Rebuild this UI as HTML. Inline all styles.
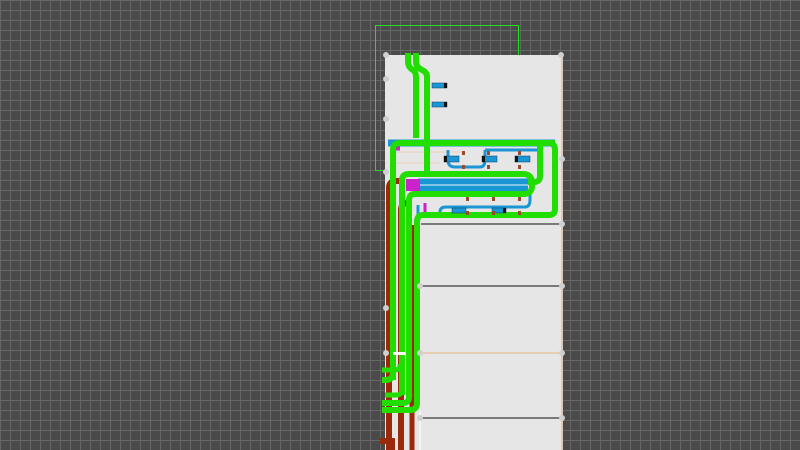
<!DOCTYPE html>
<html><head><style>html,body{margin:0;padding:0;background:#4b4b4b}svg{display:block}</style></head><body>
<svg width="800" height="450" viewBox="0 0 800 450" xmlns="http://www.w3.org/2000/svg">
<defs><pattern id="g" width="10" height="10" patternUnits="userSpaceOnUse"><rect width="10" height="10" fill="#4a4a4a"/><path d="M0 0.5H10M0.5 0V10" stroke="#666" stroke-width="1"/></pattern></defs>
<rect width="800" height="450" fill="url(#g)"/>
<rect x="375.5" y="25.5" width="143" height="145" fill="none" stroke="#22dd22" stroke-width="1"/>
<rect x="385" y="55" width="177" height="395" fill="#e6e6e6"/>
<line x1="562" y1="55" x2="562" y2="450" stroke="#e0c8b4" stroke-width="2"/>
<line x1="420" y1="224" x2="562" y2="224" stroke="#7a7a7a" stroke-width="2"/>
<line x1="420" y1="286" x2="562" y2="286" stroke="#7a7a7a" stroke-width="2"/>
<line x1="420" y1="353" x2="562" y2="353" stroke="#e8cdb5" stroke-width="2"/>
<line x1="420" y1="418" x2="562" y2="418" stroke="#7a7a7a" stroke-width="2"/>
<line x1="420" y1="222" x2="420" y2="450" stroke="#f4f4f4" stroke-width="2"/>
<line x1="390" y1="152" x2="465" y2="152" stroke="#e8cdb5" stroke-width="1"/>
<line x1="390" y1="163" x2="440" y2="163" stroke="#e8cdb5" stroke-width="1"/>
<g fill="none" stroke-linecap="butt">
<path d="M389 450V188Q389 181 396 181H405" stroke="#9a2a0a" stroke-width="6"/>
<path d="M401 450V210Q401 203 408 203H412" stroke="#9a2a0a" stroke-width="6"/>
<path d="M412 450V225" stroke="#9a2a0a" stroke-width="5"/>
<path d="M380 441H392V450" stroke="#9a2a0a" stroke-width="6"/>
<path d="M388 143H555" stroke="#1a96d4" stroke-width="7"/>
<path d="M418 185H528" stroke="#1a96d4" stroke-width="13"/>
<path d="M418 185H528" stroke="#e8f4fa" stroke-width="1"/>
<path d="M406 185H420" stroke="#cc22cc" stroke-width="12"/>
<path d="M395 148H400" stroke="#cc22cc" stroke-width="5"/>
<path d="M448 150V160Q448 167 455 167H480Q485 167 485 160V150M485 150H538" stroke="#1a96d4" stroke-width="3"/>
<path d="M418 205V215M440 216V212Q440 207 446 207H525Q530 207 530 200V194" stroke="#1a96d4" stroke-width="3"/>
<path d="M425 203V215" stroke="#cc22cc" stroke-width="3"/>
<path d="M408 53V62Q408 67 413 70Q416 72 416 77V138" stroke="#22dd00" stroke-width="6"/>
<path d="M416 53V62Q416 67 422 70Q427 72 427 77V172" stroke="#22dd00" stroke-width="6"/>
<path d="M393 380V150Q393 143 400 143H549Q555 143 555 150V209Q555 215 549 215H423Q417 215 417 222V403Q417 410 410 410H382" stroke="#22dd00" stroke-width="6"/>
<path d="M512 143H555" stroke="#22dd00" stroke-width="6"/>
<path d="M540 143V176Q540 182 534 182H528" stroke="#22dd00" stroke-width="6"/>
<path d="M402 395V180Q402 174 409 174H523Q532 174 532 183V186Q532 194 523 194H414Q409 194 409 201V397Q409 403 403 403H382" stroke="#22dd00" stroke-width="6"/>
<path d="M393 372Q393 380 386 380H382" stroke="#22dd00" stroke-width="6"/>
<path d="M400 364V366Q400 370 394 370H382" stroke="#22dd00" stroke-width="5"/>
<path d="M402 390Q402 395 396 395H385" stroke="#22dd00" stroke-width="5"/>
</g>
<rect x="393" y="352" width="12" height="3" fill="#fff"/>
<g fill="#1a96d4" stroke="#0a3a66" stroke-width="0.5">
<rect x="432" y="83" width="15" height="5"/><rect x="432" y="102" width="15" height="5"/>
<rect x="444" y="156" width="15" height="6"/><rect x="482" y="156" width="15" height="6"/><rect x="515" y="156" width="15" height="6"/>
<rect x="452" y="208" width="14" height="5"/><rect x="492" y="208" width="14" height="5"/>
</g>
<g fill="#111"><rect x="444" y="83" width="3" height="5"/><rect x="444" y="102" width="3" height="5"/><rect x="444" y="156" width="3" height="6"/><rect x="482" y="156" width="3" height="6"/><rect x="515" y="156" width="3" height="6"/><rect x="503" y="208" width="3" height="5"/></g>
<g fill="#9a4a2a"><rect x="462" y="151" width="3" height="4"/><rect x="487" y="151" width="3" height="4"/><rect x="518" y="151" width="3" height="4"/><rect x="462" y="165" width="3" height="4"/><rect x="487" y="165" width="3" height="4"/><rect x="518" y="165" width="3" height="4"/><rect x="466" y="197" width="3" height="4"/><rect x="492" y="197" width="3" height="4"/><rect x="518" y="197" width="3" height="4"/><rect x="466" y="211" width="3" height="4"/><rect x="492" y="211" width="3" height="4"/><rect x="518" y="211" width="3" height="4"/></g>
<g fill="#cfcfcf"><circle cx="386" cy="55" r="3"/><circle cx="561" cy="55" r="3"/><circle cx="386" cy="79" r="3"/><circle cx="386" cy="119" r="3"/><circle cx="386" cy="172" r="3"/><circle cx="562" cy="159" r="3"/><circle cx="562" cy="224" r="3"/><circle cx="562" cy="286" r="3"/><circle cx="562" cy="353" r="3"/><circle cx="562" cy="418" r="3"/><circle cx="386" cy="308" r="3"/><circle cx="386" cy="353" r="3"/><circle cx="420" cy="286" r="3"/><circle cx="420" cy="353" r="3"/><circle cx="420" cy="418" r="3"/></g>
</svg>
</body></html>
